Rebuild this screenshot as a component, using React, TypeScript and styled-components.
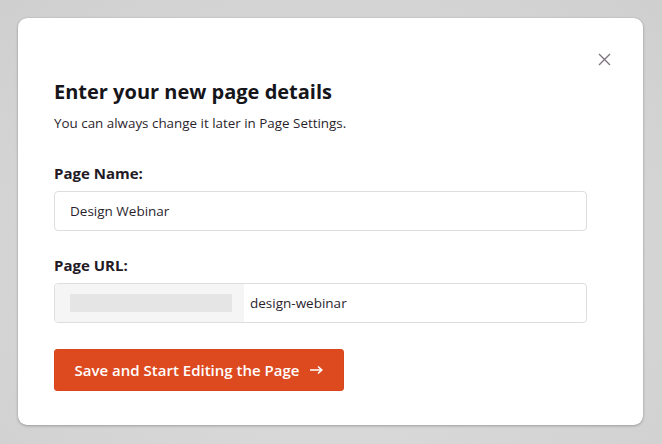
import React from "react";
import styled, { createGlobalStyle } from "styled-components";

const Global = createGlobalStyle`
  html, body { margin: 0; padding: 0; }
  body {
    width: 662px;
    height: 444px;
    overflow: hidden;
    background: #d5d5d5;
    font-family: "Open Sans", "Liberation Sans", sans-serif;
  }
`;

const Page = styled.div`
  width: 662px;
  height: 444px;
  box-sizing: border-box;
  padding: 18px 19px 19px 18px;
  background: radial-gradient(ellipse at 50% 60%, #dedede 0%, #d4d4d4 70%, #cfcfcf 100%);
`;

const Card = styled.div`
  position: relative;
  box-sizing: border-box;
  height: 407px;
  background: #fff;
  border-radius: 9px;
  box-shadow: 0 1px 3px rgba(0, 0, 0, 0.25), 0 0 1px rgba(0, 0, 0, 0.2);
  padding: 60px 56px 0 36px;
  display: flex;
  flex-direction: column;
`;

const Close = styled.button`
  position: absolute;
  top: 34px;
  right: 32px;
  width: 14px;
  height: 14px;
  padding: 0;
  border: none;
  background: none;
  display: flex;
  align-items: center;
  justify-content: center;
  cursor: pointer;
`;

const Title = styled.h1`
  margin: 0;
  font-size: 20px;
  line-height: 28px;
  font-weight: 700;
  color: #15151a;
`;

const Subtitle = styled.p`
  margin: 7px 0 0;
  font-size: 13.4px;
  line-height: 20px;
  color: #2b1f2e;
`;

const Field = styled.div<{ $top: number }>`
  margin-top: ${(p) => p.$top}px;
  display: flex;
  flex-direction: column;
  gap: 8px;
`;

const Label = styled.label`
  font-size: 15px;
  line-height: 20px;
  font-weight: 700;
  color: #231a25;
`;

const InputBox = styled.div`
  box-sizing: border-box;
  height: 40px;
  border: 1px solid #dedede;
  border-radius: 4px;
  display: flex;
  align-items: stretch;
  overflow: hidden;
  background: #fff;
`;

const InputText = styled.span`
  display: flex;
  align-items: center;
  padding-left: 15px;
  font-size: 13.5px;
  color: #2b1f2e;
`;

const Prefix = styled.div`
  width: 189px;
  background: #f5f5f5;
  display: flex;
  align-items: center;
  padding-left: 15px;
  box-sizing: border-box;
`;

const Redacted = styled.div`
  width: 162px;
  height: 18px;
  background: #e5e5e5;
`;

const UrlText = styled(InputText)`
  padding-left: 6px;
`;

const Button = styled.button`
  margin-top: 26px;
  align-self: flex-start;
  box-sizing: border-box;
  width: 290px;
  height: 42px;
  border: 1px solid #d9461c;
  border-radius: 3px;
  background: #dd4a1f;
  color: #fff;
  font-family: inherit;
  font-size: 15px;
  font-weight: 600;
  display: flex;
  align-items: center;
  justify-content: center;
  gap: 11px;
  cursor: pointer;
`;

export default function App() {
  return (
    <>
      <Global />
      <Page>
        <Card>
          <Close aria-label="Close">
            <svg width="13" height="13" viewBox="0 0 13 13">
              <path d="M1 1 L12 12 M12 1 L1 12" stroke="#7d747e" strokeWidth="1.4" fill="none" />
            </svg>
          </Close>
          <Title>Enter your new page details</Title>
          <Subtitle>You can always change it later in Page Settings.</Subtitle>
          <Field $top={30}>
            <Label>Page Name:</Label>
            <InputBox>
              <InputText>Design Webinar</InputText>
            </InputBox>
          </Field>
          <Field $top={24}>
            <Label>Page URL:</Label>
            <InputBox>
              <Prefix>
                <Redacted />
              </Prefix>
              <UrlText>design-webinar</UrlText>
            </InputBox>
          </Field>
          <Button>
            <span>Save and Start Editing the Page</span>
            <svg width="13" height="10" viewBox="0 0 13 10">
              <path d="M0 5 H11.5 M8 1.5 L11.8 5 L8 8.5" stroke="#fff" strokeWidth="1.6" fill="none" />
            </svg>
          </Button>
        </Card>
      </Page>
    </>
  );
}
